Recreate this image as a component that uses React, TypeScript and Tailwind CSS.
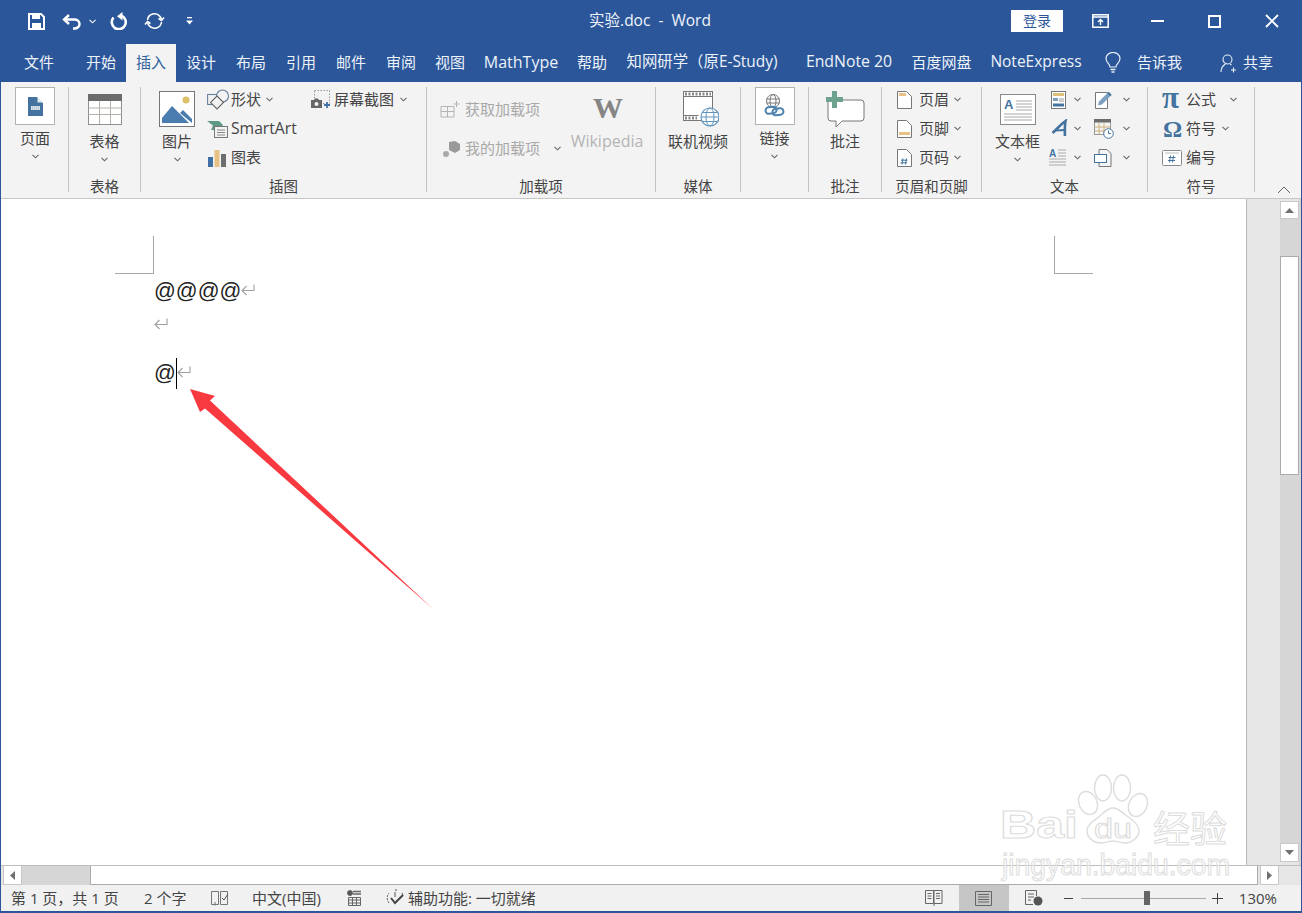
import type { ReactNode } from 'react';

const Chev = ({ color = '#666' }: { color?: string }) => (
  <svg width="7" height="5" viewBox="0 0 7 5" fill="none" stroke={color} strokeWidth="1.1"><path d="M0.5 0.8 3.5 3.8 6.5 0.8" /></svg>
);

const Sep = () => <div className="w-px mt-[5px] mb-[6px] bg-[#c3c3c3] shrink-0" />;

function Group({ className, label, children }: { className: string; label: string; children: ReactNode }) {
  return (
    <div className={`flex flex-col shrink-0 ${className}`}>
      <div className="flex-1 flex">{children}</div>
      <div className="h-[20px] mb-[1px] leading-[20px] text-center text-[14.5px] text-[#444]">{label}</div>
    </div>
  );
}

function LargeBtn({ icon, label, chev, boxed, className = '', muted }: { icon: ReactNode; label: string; chev?: boolean; boxed?: boolean; className?: string; muted?: boolean }) {
  return (
    <div className={`flex flex-col items-center pt-[5px] ${className}`}>
      {boxed ? (
        <div className="w-[40px] h-[38px] bg-white border border-[#b2b2b2] flex items-center justify-center mb-[3px]">{icon}</div>
      ) : (
        <div className="h-[44px] flex items-center justify-center">{icon}</div>
      )}
      <div className={`h-[20px] leading-[20px] whitespace-nowrap ${muted ? 'text-[16px] text-[#b4b4b4]' : 'text-[15px] text-[#444]'}`}>{label}</div>
      {chev && <div className="h-[16px] flex items-center"><Chev /></div>}
    </div>
  );
}

function Row({ icon, slot, label, chev, muted }: { icon: ReactNode; slot: string; label?: string; chev?: string; muted?: boolean }) {
  return (
    <div className="flex items-center h-[29px]">
      <div className={`flex items-center justify-start shrink-0 ${slot}`}>{icon}</div>
      {label && <span className={`whitespace-nowrap ${label === 'SmartArt' ? 'text-[15.7px]' : 'text-[15px]'} ${muted ? 'text-[#a8a8a8]' : 'text-[#444]'}`}>{label}</span>}
      {chev && <span className={`flex ${chev}`}><Chev /></span>}
    </div>
  );
}

/* title bar icons */
const SaveIcon = () => (
  <svg width="17" height="17" viewBox="0 0 17 17" fill="#fff"><path d="M1 1h12l3 3v12H1z" fill="none" stroke="#fff" strokeWidth="2" /><rect x="4" y="1" width="8" height="5" /><rect x="4" y="10" width="9" height="6" /></svg>
);
const UndoIcon = () => (
  <svg width="19" height="17" viewBox="0 0 19 17" fill="none" stroke="#fff" strokeWidth="2.4"><path d="M7 2 2 6.5 7 11" /><path d="M2.5 6.5H12a5 4.5 0 0 1 1 9h-2" /></svg>
);
const RepeatIcon = () => (
  <svg width="18" height="18" viewBox="0 0 18 18" fill="none" stroke="#fff" strokeWidth="2.6"><path d="M11.500 3.700A7 7 0 1 1 3.500 5.500" /><path d="M12.500 0v8.500L7 4.200z" fill="#fff" stroke="none" /></svg>
);
const RefreshIcon = () => (
  <svg width="21" height="18" viewBox="0 0 21 18" fill="none" stroke="#fff" strokeWidth="1.6"><path d="M3.500 8a7 7 0 0 1 12.500-3.500l1.500 2.500" /><path d="M17.500 10a7 7 0 0 1-12.500 3.500L3.500 11" /><path d="M20 5.500 17.500 8.500 14.500 6.500M1 12.500l2.500-3 3 2" /></svg>
);
const CustomizeIcon = () => (
  <svg width="7" height="8" viewBox="0 0 7 8" fill="#fff"><rect x="1" y="0" width="5" height="1.300" /><path d="M0 3.500h7L3.500 7.500z" /></svg>
);
const RibbonOptIcon = () => (
  <svg width="17" height="14" viewBox="0 0 17 14" fill="none" stroke="#fff"><rect x="0.800" y="0.800" width="15.400" height="12.400" strokeWidth="1.500" /><path d="M1 3h15" strokeWidth="1.500" /><path d="M8.500 11V6M6 8l2.500-2.500L11 8" strokeWidth="1.400" /></svg>
);
const BulbIcon = () => (
  <svg width="16" height="22" viewBox="0 0 16 22" fill="none" stroke="#e8eef7" strokeWidth="1.200"><path d="M5 15c0-3-4-4.500-4-8.500a7 6 0 0 1 14 0c0 4-4 5.500-4 8.500z" /><path d="M5.500 17.500h5M6.500 20h3" strokeWidth="1.500" /></svg>
);
const ShareIcon = () => (
  <svg width="18" height="19" viewBox="0 0 18 19" fill="none" stroke="#e8eef7" strokeWidth="1.100"><circle cx="7.500" cy="5.500" r="4.500" /><path d="M1 18c0-4 2-6.500 4.500-8M10 10l1.500 1" /><path d="M13.500 13.500v5M11 16h5" /></svg>
);

/* ribbon icons */
const PageIcon = () => (
  <svg width="15" height="19" viewBox="0 0 15 19"><path d="M0 0h9l6 6v13H0z" fill="#44739f" /><path d="M9.500 0 15 5.500H9.500z" fill="#dfe6ee" /><path d="M3 9h9v4H3z" fill="#b9cadb" /><path d="M3 10h9M3 12h9" stroke="#fff" strokeDasharray="1 1" /></svg>
);
const TableIcon = () => (
  <svg width="34" height="31" viewBox="0 0 34 31" fill="#fff" stroke="#8f8f8f"><rect x="0.500" y="0.500" width="33" height="30" /><rect x="0" y="0" width="34" height="7" fill="#6b6b6b" stroke="none" /><path d="M0.500 14h33M0.500 20.500h33M11.500 7v23M22.500 7v23" fill="none" stroke="#b5b0a8" /></svg>
);
const PictureIcon = () => (
  <svg width="36" height="36" viewBox="0 0 36 36"><rect x="0.500" y="0.500" width="35" height="35" fill="#fff" stroke="#777" /><circle cx="27" cy="9" r="3.500" fill="#dcc06a" /><path d="M3 32v-5L13 15l17 17z" fill="#4b7cb0" /><path d="M21 22l3-3 9 9v4z" fill="#4b7cb0" /></svg>
);
const ShapesIcon = () => (
  <svg width="23" height="21" viewBox="0 0 23 21" fill="none" stroke="#67809c" strokeWidth="1.100"><rect x="0.600" y="5.500" width="11" height="10" /><circle cx="15.500" cy="7" r="6" fill="#f3f3f3" /><path d="M10 7l6.500 6.500-6.500 6.500-6.500-6.500z" fill="#f3f3f3" stroke="#666" /></svg>
);
const ScreenshotIcon = () => (
  <svg width="20" height="19" viewBox="0 0 20 19" fill="none"><rect x="3.500" y="0.500" width="15" height="13" stroke="#999" strokeDasharray="1.500 1.500" /><path d="M0 10h3l1-1.500h3L8 10h3v8H0z" fill="#666" /><circle cx="5.500" cy="14" r="2" fill="#f3f3f3" /><path d="M13 15h6M16 12v6" stroke="#4373a6" strokeWidth="1.800" /></svg>
);
const SmartArtIcon = () => (
  <svg width="21" height="18" viewBox="0 0 21 18" fill="none"><path d="M0 1h12l4 4-3 5H4l2-4.500z" fill="#5d9b87" /><rect x="7.500" y="6.500" width="13" height="11" fill="#f3f3f3" stroke="#777" /><path d="M10 10h8M10 12.500h8M10 15h8" stroke="#888" /></svg>
);
const ChartIcon = () => (
  <svg width="18" height="18" viewBox="0 0 18 18"><rect x="0" y="8" width="5" height="10" fill="#3f6fa3" /><rect x="6.500" y="1" width="5" height="17" fill="#e8c184" /><rect x="13" y="5" width="5" height="13" fill="#6e6e6e" /></svg>
);
const AddinIcon = () => (
  <svg width="20" height="17" viewBox="0 0 20 17" fill="none" stroke="#b5b5b5"><path d="M1 5.500h13V16H1zM7.500 5.500V16M1 10.500h13" /><path d="M16.500 0v6M13.500 3h6" /></svg>
);
const MyAddinIcon = () => (
  <svg width="17" height="16" viewBox="0 0 17 16" fill="#9a9a9a"><path d="M6 1l6-1 5 3v6l-5 3-6-3z" /><circle cx="3" cy="13" r="3" fill="#a9a9a9" /></svg>
);
const VideoIcon = () => (
  <svg width="36" height="36" viewBox="0 0 36 36" fill="none"><rect x="0.500" y="0.500" width="29" height="29" fill="#fff" stroke="#777" /><path d="M0.500 5.500h29M0.500 24.500h15" stroke="#777" /><path d="M2 3h26M2 27h12" stroke="#888" strokeWidth="3" strokeDasharray="2 1.500" /><circle cx="27" cy="26" r="9" fill="#fff" stroke="#5f94bd" strokeWidth="1.200" /><ellipse cx="27" cy="26" rx="4" ry="9" stroke="#5f94bd" /><path d="M18 26h18M19.500 21.500h15M19.500 30.500h15" stroke="#5f94bd" /></svg>
);
const LinkIcon = () => (
  <svg width="21" height="24" viewBox="0 0 21 24" fill="none"><circle cx="9" cy="7" r="6.500" stroke="#777" /><ellipse cx="9" cy="7" rx="3" ry="6.500" stroke="#777" /><path d="M2.500 5h13M2.500 9h13" stroke="#777" /><rect x="1.500" y="13" width="11" height="6.500" rx="3.200" stroke="#4d82ad" strokeWidth="2" transform="rotate(-8 7 16)" /><rect x="8.500" y="14.500" width="11" height="6.500" rx="3.200" stroke="#4d82ad" strokeWidth="2" transform="rotate(-8 14 18)" /></svg>
);
const CommentIcon = () => (
  <svg width="39" height="37" viewBox="0 0 39 37"><path d="M2 9h33q3 0 3 3v15q0 3-3 3H16l-6 6v-6H5q-3 0-3-3z" fill="#fff" stroke="#777" /><path d="M6 0h5v6h6v5h-6v6H6v-6H0V6h6z" fill="#6da28e" /></svg>
);
const HeaderIcon = ({ band }: { band?: 'top' | 'bottom' | 'num' }) => (
  <svg width="15" height="18" viewBox="0 0 15 18" fill="#fff"><path d="M0.500 0.500h9l5 5v12h-14z" stroke="#777" />
    {band === 'top' && <rect x="2" y="2" width="7" height="3" fill="#e8c184" />}
    {band === 'bottom' && <rect x="2" y="12" width="11" height="3" fill="#e8c184" />}
    {band === 'num' && <path d="M6 9.500l-1 6M9.500 9.500l-1 6M4 11.200h6.500M3.500 13.800h6.500" stroke="#44739f" fill="none" />}
  </svg>
);
const TextBoxIcon = () => (
  <svg width="36" height="31" viewBox="0 0 36 31" fill="none"><rect x="0.500" y="0.500" width="35" height="30" fill="#fff" stroke="#8a8a8a" /><text x="4" y="15" fontSize="13" fontWeight="700" fill="#44739f" fontFamily="Liberation Sans, sans-serif">A</text><path d="M16 7h16M16 10h16M16 13h16M16 16h16M4 20h28M4 23h28M4 26h28" stroke="#aaa" /></svg>
);
const PartsIcon = () => (
  <svg width="15" height="18" viewBox="0 0 15 18"><rect x="0.500" y="0.500" width="14" height="17" fill="#fff" stroke="#777" /><rect x="2" y="2" width="11" height="3" fill="#dcc07a" /><rect x="2" y="7" width="5" height="3" fill="#7f9fbf" /><path d="M8 8h5M8 10h5" stroke="#999" /><rect x="2" y="12.500" width="11" height="3" fill="#44739f" /></svg>
);
const ArtIcon = () => (
  <svg width="17" height="19" viewBox="0 0 17 19" fill="none" stroke="#44739f" strokeWidth="2.600"><path d="M1.500 14C6 10 10 5 14.500 2c-1 5-.6 10-.6 15" /><path d="M4 11.500l10-.5" strokeWidth="1.800" /></svg>
);
const DropCapIcon = () => (
  <svg width="18" height="19" viewBox="0 0 18 19" fill="none"><text x="0" y="9" fontSize="10" fontWeight="700" fill="#44739f" fontFamily="Liberation Sans, sans-serif">A</text><path d="M9 2h8M9 5h8M9 8h8M0 11h17M0 14h17M0 17h17" stroke="#aaa" /></svg>
);
const SignIcon = () => (
  <svg width="19" height="18" viewBox="0 0 19 18" fill="none"><path d="M0.500 1.500h12v16h-12z" fill="#fff" stroke="#777" /><path d="M3 14.500l1-4 9-9 3 3-9 9z" fill="#7f9fbf" /><path d="M13 1.500l3 3" stroke="#44739f" strokeWidth="2" /></svg>
);
const DateIcon = () => (
  <svg width="20" height="20" viewBox="0 0 20 20" fill="none"><rect x="0.500" y="0.500" width="16" height="15" fill="#f3f3f3" stroke="#999" /><rect x="0" y="0" width="17" height="3.500" fill="#6b6b6b" /><path d="M5 4v11M10 4v11M1 8h15M1 12h15" stroke="#cdb07a" /><circle cx="14.500" cy="14.500" r="4.800" fill="#fff" stroke="#44739f" /><path d="M14.500 11.500v3h2.500" stroke="#44739f" /></svg>
);
const ObjectIcon = () => (
  <svg width="18" height="18" viewBox="0 0 18 18" fill="none"><path d="M5 5V0.500h8l4 4v13H5V13" stroke="#777" fill="#f3f3f3" /><rect x="0.500" y="5.500" width="12" height="8" fill="#fff" stroke="#44739f" /></svg>
);
const HashIcon = () => (
  <svg width="20" height="16" viewBox="0 0 20 16" fill="none"><rect x="0.500" y="0.500" width="19" height="15" rx="1" fill="#fff" stroke="#8a8a8a" /><path d="M3 3h14" stroke="#bbb" /><path d="M8.500 5.500l-1 7M11.500 5.500l-1 7M6.500 7.500h7M6 10.500h7" stroke="#44739f" /></svg>
);

export default function App() {
  const tabs: [string, string][] = [
    ['开始', 'w-[50px]'], ['插入', 'w-[50px]'], ['设计', 'w-[50px]'], ['布局', 'w-[50px]'], ['引用', 'w-[50px]'], ['邮件', 'w-[50px]'], ['审阅', 'w-[50px]'],
    ['视图', 'w-[48px]'], ['MathType', 'w-[94px] text-[16px]'], ['帮助', 'w-[48px]'], ['知网研学（原E-Study)', 'w-[172px] text-[15.400px]'], ['EndNote 20', 'w-[122px] text-[15.800px]'], ['百度网盘', 'w-[63px]'], ['NoteExpress', 'w-[126px] text-[15.500px]'],
  ];

  return (
    <div className="relative w-[1302px] h-[913px] overflow-hidden flex flex-col bg-[#2b579a] border-x border-b-2 border-[#2b579a] font-['Open_Sans','Noto_Sans_CJK_SC',sans-serif]">
      {/* Title bar */}
      <div className="h-[44px] pb-[2px] shrink-0 grid grid-cols-[1fr_auto_1fr] items-center text-white">
        <div className="flex items-center pl-[27px]">
          <SaveIcon />
          <span className="ml-[17px] flex"><UndoIcon /></span>
          <span className="ml-[8px] flex"><Chev color="#fff" /></span>
          <span className="ml-[14px] flex"><RepeatIcon /></span>
          <span className="ml-[16px] flex"><RefreshIcon /></span>
          <span className="ml-[21px] flex"><CustomizeIcon /></span>
        </div>
        <div className="text-[15.500px] text-[#f0f4fa] whitespace-pre -ml-[2px]">实验.doc  -  Word</div>
        <div className="flex items-center justify-end">
          <div className="w-[52px] h-[22px] bg-white text-[#2b579a] text-[14px] leading-[22px] text-center">登录</div>
          <span className="ml-[29px] flex"><RibbonOptIcon /></span>
          <div className="ml-[42px] w-[13px] h-[2px] bg-white" />
          <div className="ml-[44px] w-[13px] h-[13px] border-2 border-white" />
          <svg className="ml-[44px] mr-[22px]" width="14" height="14" viewBox="0 0 14 14" stroke="#fff" strokeWidth="1.800"><path d="M1 1l12 12M13 1 1 13" /></svg>
        </div>
      </div>

      {/* Tabs */}
      <div className="h-[38px] shrink-0 flex items-center text-[15px] text-[#eef2f9]">
        <div className="w-[75px] pl-[23px] pb-[2px]">文件</div>
        {tabs.map(([name, w]) => (
          <div key={name} className={`h-full pb-[2px] flex items-center justify-center whitespace-nowrap ${w} ${name === '插入' ? 'bg-[#f3f3f3] text-[#2f5f9e]' : ''}`}>{name}</div>
        ))}
        <span className="ml-[6px] flex"><BulbIcon /></span>
        <span className="ml-[16px] whitespace-nowrap pb-[2px]">告诉我</span>
        <span className="ml-[38px] flex"><ShareIcon /></span>
        <span className="ml-[5px] whitespace-nowrap pb-[2px]">共享</span>
      </div>

      {/* Ribbon */}
      <div className="h-[117px] shrink-0 flex bg-[#f3f3f3] border-b border-[#c6c6c6]">
        <Group className="w-[67px]" label="">
          <LargeBtn className="ml-[14px]" boxed icon={<PageIcon />} label="页面" chev />
        </Group>
        <Sep />
        <Group className="w-[71px]" label="表格">
          <LargeBtn className="w-full" icon={<TableIcon />} label="表格" chev />
        </Group>
        <Sep />
        <Group className="w-[285px]" label="插图">
          <LargeBtn className="ml-[18px] w-[36px]" icon={<PictureIcon />} label="图片" chev />
          <div className="ml-[12px] w-[104px] pt-[3px]">
            <Row slot="w-[24px]" icon={<ShapesIcon />} label="形状" chev="ml-[5px]" />
            <Row slot="w-[24px]" icon={<SmartArtIcon />} label="SmartArt" />
            <Row slot="w-[24px]" icon={<span className="ml-[1px] flex"><ChartIcon /></span>} label="图表" />
          </div>
          <div className="pt-[3px]">
            <Row slot="w-[23px]" icon={<ScreenshotIcon />} label="屏幕截图" chev="ml-[6px]" />
          </div>
        </Group>
        <Sep />
        <Group className="w-[228px]" label="加载项">
          <div className="ml-[13px] w-[131px] pt-[13px]">
            <Row slot="w-[25px]" icon={<AddinIcon />} label="获取加载项" muted />
            <div className="h-[10px]" />
            <Row slot="w-[25px]" icon={<span className="ml-[3px] flex"><MyAddinIcon /></span>} label="我的加载项" chev="ml-[14px]" muted />
          </div>
          <LargeBtn className="w-[72px]" muted icon={<span className="font-['Liberation_Serif',serif] font-bold text-[30px] leading-none text-[#858585] pb-[3px] pl-[2px]">W</span>} label="Wikipedia" />
        </Group>
        <Sep />
        <Group className="w-[84px]" label="媒体">
          <LargeBtn className="w-full" icon={<span className="ml-[6px] flex"><VideoIcon /></span>} label="联机视频" />
        </Group>
        <Sep />
        <Group className="w-[67px]" label="">
          <LargeBtn className="w-full" boxed icon={<LinkIcon />} label="链接" chev />
        </Group>
        <Sep />
        <Group className="w-[72px]" label="批注">
          <LargeBtn className="w-full" icon={<CommentIcon />} label="批注" />
        </Group>
        <Sep />
        <Group className="w-[99px]" label="页眉和页脚">
          <div className="ml-[13px] pt-[3px]">
            <Row slot="w-[24px]" icon={<span className="ml-[2px] flex"><HeaderIcon band="top" /></span>} label="页眉" chev="ml-[5px]" />
            <Row slot="w-[24px]" icon={<span className="ml-[2px] flex"><HeaderIcon band="bottom" /></span>} label="页脚" chev="ml-[5px]" />
            <Row slot="w-[24px]" icon={<span className="ml-[2px] flex"><HeaderIcon band="num" /></span>} label="页码" chev="ml-[5px]" />
          </div>
        </Group>
        <Sep />
        <Group className="w-[165px]" label="文本">
          <LargeBtn className="ml-[13px] w-[45px]" icon={<TextBoxIcon />} label="文本框" chev />
          <div className="ml-[8px] w-[44px] pt-[3px]">
            <Row slot="w-[26px]" icon={<span className="ml-[3px] flex"><PartsIcon /></span>} chev="ml-0" />
            <Row slot="w-[26px]" icon={<span className="ml-[3px] flex"><ArtIcon /></span>} chev="ml-0" />
            <Row slot="w-[26px]" icon={<span className="ml-[1px] flex"><DropCapIcon /></span>} chev="ml-0" />
          </div>
          <div className="pt-[3px]">
            <Row slot="w-[31px]" icon={<span className="ml-[3px] flex"><SignIcon /></span>} chev="ml-0" />
            <Row slot="w-[31px]" icon={<span className="ml-[2px] flex"><DateIcon /></span>} chev="ml-0" />
            <Row slot="w-[31px]" icon={<span className="ml-[2px] flex"><ObjectIcon /></span>} chev="ml-0" />
          </div>
        </Group>
        <Sep />
        <Group className="w-[106px]" label="符号">
          <div className="ml-[12px] pt-[3px]">
            <Row slot="w-[26px]" icon={<span className="ml-[2px] font-['Liberation_Serif',serif] font-bold text-[31px] leading-[20px] pb-[4px] text-[#44739f]">π</span>} label="公式" chev="ml-[14px]" />
            <Row slot="w-[26px]" icon={<span className="ml-[3px] font-['Liberation_Serif',serif] font-bold text-[24px] leading-none text-[#44739f]">Ω</span>} label="符号" chev="ml-[6px]" />
            <Row slot="w-[26px]" icon={<span className="ml-[2px] flex"><HashIcon /></span>} label="编号" />
          </div>
        </Group>
        <Sep />
        <div className="flex-1 flex items-end justify-end pr-[10px] pb-[4px]">
          <svg width="14" height="8" viewBox="0 0 14 8" fill="none" stroke="#666"><path d="M1 7l6-6 6 6" /></svg>
        </div>
      </div>

      {/* Document */}
      <div className="flex-1 min-h-0 flex bg-[#e6e6e6]">
        <div className="w-[1246px] bg-white border-r border-[#b9b9b9] shrink-0">
          <div className="pt-[37px] pl-[114px] pr-[153px] flex justify-between">
            <div className="w-[39px] h-[38px] border-r border-b border-[#a8a8a8]" />
            <div className="w-[39px] h-[38px] border-l border-b border-[#a8a8a8]" />
          </div>
          <div className="pl-[153px] font-['Liberation_Sans',sans-serif] text-[21.500px] text-[#222]">
            <div className="h-[34px] flex items-center">
              @@@@
              <ReturnMark />
            </div>
            <div className="h-[34px] flex items-center"><ReturnMark /></div>
            <div className="h-[33px] mt-[15px] flex items-center">
              @
              <span className="w-px h-[31px] bg-black" />
              <ReturnMark />
            </div>
          </div>
        </div>
        <div className="w-[33px] shrink-0" />
        {/* Vertical scrollbar */}
        <div className="w-[19px] shrink-0 pt-[2px] pb-[3px] flex flex-col">
          <div className="h-[18px] bg-white border border-[#c8c8c8] flex items-center justify-center"><Tri dir="up" /></div>
          <div className="h-[37px] bg-[#d6d6d6]" />
          <div className="h-[219px] bg-white border border-[#ababab]" />
          <div className="flex-1 bg-[#d6d6d6]" />
          <div className="h-[19px] bg-white border border-[#c8c8c8] flex items-center justify-center"><Tri dir="down" /></div>
        </div>
        <div className="flex-1 bg-[#d6d6d6]" />
      </div>

      {/* Horizontal scrollbar */}
      <div className="h-[20px] shrink-0 flex items-stretch bg-[#e6e6e6] border-t border-[#bdbdbd] pl-[2px]">
        <div className="w-[19px] bg-white border-x border-b border-[#c8c8c8] flex items-center justify-center"><Tri dir="left" /></div>
        <div className="w-[68px] bg-[#d6d6d6]" />
        <div className="w-[1168px] bg-white border-x border-b border-[#ababab]" />
        <div className="w-[2px]" />
        <div className="w-[19px] bg-white border-x border-b border-[#c8c8c8] flex items-center justify-center"><Tri dir="right" /></div>
      </div>

      {/* Status bar */}
      <div className="h-[26px] shrink-0 flex items-center bg-[#f1f1f1] text-[15px] text-[#444] whitespace-nowrap">
        <span className="ml-[10px] w-[133px]">第 1 页，共 1 页</span>
        <span className="w-[67px]">2 个字</span>
        <svg width="18" height="15" viewBox="0 0 18 15" fill="none" stroke="#777"><path d="M0.500 0.500h7v13h-7zM9.500 0.500h7v13h-7z" /><path d="M4 14.500V11" /><path d="M11 7l2 2 4-6" stroke="#555" /></svg>
        <span className="ml-[23px] w-[95px]">中文(中国)</span>
        <svg width="15" height="16" viewBox="0 0 15 16" fill="none" stroke="#666"><circle cx="3" cy="3" r="2.500" fill="#555" /><path d="M6 1.500h8M6 4h8" strokeWidth="1.500" /><path d="M1.500 7.500h12v8h-12zM1.500 10h12M1.500 13h12M5.500 7.500v8M9.500 7.500v8" /></svg>
        <svg className="ml-[24px]" width="19" height="18" viewBox="0 0 19 18" fill="none" stroke="#555"><path d="M3 14a8 8 0 0 1 0-10M16 4l1 2M9 1h3" strokeDasharray="2 1.200" /><path d="M5 9l4 5 8-8" strokeWidth="2" stroke="#444" /><path d="M9 3v5" /></svg>
        <span className="ml-[3px]">辅助功能: 一切就绪</span>
        <div className="flex-1" />
        <svg width="18" height="16" viewBox="0 0 18 16" fill="none" stroke="#666"><path d="M0.500 0.500h8v13h-8zM9 0.500h8v13H9z" /><path d="M2.500 3.500h4M2.500 6h4M2.500 8.500h4M11 3.500h4M11 6h4M11 8.500h4M9 14v2" /></svg>
        <div className="ml-[16px] w-[50px] h-full bg-[#c6c6c6] flex items-center justify-center">
          <svg width="17" height="15" viewBox="0 0 17 15" fill="none" stroke="#666"><path d="M0.500 0.500h16v14h-16z" /><path d="M3 3.500h11M3 6h11M3 8.500h11M3 11h11" /></svg>
        </div>
        <svg className="ml-[16px]" width="18" height="16" viewBox="0 0 18 16" fill="none" stroke="#666"><path d="M8 14.500H0.500V0.500h11V6" /><path d="M3 4h6M3 7h6M3 10h3" /><circle cx="13" cy="11" r="4.500" fill="#555" stroke="none" /></svg>
        <div className="ml-[21px] w-[9px] h-px bg-[#444]" />
        <div className="ml-[8px] w-[125px] h-px bg-[#a8a8a8] flex items-center">
          <div className="ml-[63px] w-[6px] h-[14px] bg-[#666] shrink-0" />
        </div>
        <div className="ml-[6px] relative w-[11px] h-[11px] flex items-center justify-center">
          <div className="w-[11px] h-px bg-[#444]" />
          <div className="absolute w-px h-[11px] bg-[#444]" />
        </div>
        <span className="ml-[16px] mr-[24px]">130%</span>
      </div>

      {/* Baidu watermark */}
      <svg className="absolute left-[994px] top-[770px]" width="240" height="118" viewBox="995 770 240 118" fill="none" stroke="#dcdcdc">
        <text x="1000" y="838" fontSize="39" fontWeight="700" fontFamily="Liberation Sans, sans-serif" textLength="78" lengthAdjust="spacingAndGlyphs" fill="#fff">Bai</text>
        <text x="1094" y="838" fontSize="27" fontFamily="Liberation Sans, sans-serif" textLength="38" lengthAdjust="spacingAndGlyphs" fill="#fff">du</text>
        <text x="1153" y="843" fontSize="37" fontFamily="Noto Sans CJK SC, sans-serif" textLength="74" lengthAdjust="spacingAndGlyphs" fill="#fff">经验</text>
        <text x="1002" y="875" fontSize="29" fontFamily="Liberation Sans, sans-serif" textLength="228" lengthAdjust="spacingAndGlyphs" fill="#fff" fillOpacity="0.4">jingyan.baidu.com</text>
        <ellipse cx="1088" cy="803" rx="9" ry="12" transform="rotate(-25 1088 803)" strokeWidth="1.400" />
        <ellipse cx="1103" cy="788" rx="8.500" ry="13" strokeWidth="1.400" />
        <ellipse cx="1122" cy="788" rx="8.500" ry="13" strokeWidth="1.400" />
        <ellipse cx="1138" cy="805" rx="9" ry="12" transform="rotate(25 1138 805)" strokeWidth="1.400" />
        <path d="M1113 808c6 0 9 5 14 8s12 9 12 15-7 12-14 12c-5 0-8-2-12-2s-7 2-12 2c-7 0-14-5-14-12s8-11 13-15 7-8 13-8z" strokeWidth="1.400" />
      </svg>

      {/* Red arrow */}
      <svg className="absolute left-[180px] top-[380px]" width="260" height="240" viewBox="180 380 260 240">
        <polygon points="189,389 214,396 209,400.500 432,609 204,408.500 199,412" fill="#f83a40" />
      </svg>
    </div>
  );
}

function ReturnMark() {
  return (
    <svg width="14" height="13" viewBox="0 0 14 13" fill="none" stroke="#a0a0a0" strokeWidth="1.100" className="mb-[2px]">
      <path d="M13 0.500V6.500H1M5.500 2 1 6.500 5.500 11" />
    </svg>
  );
}

function Tri({ dir }: { dir: 'up' | 'down' | 'left' | 'right' }) {
  const pts = { up: '0,5 9,5 4.5,0', down: '0,0 9,0 4.5,5', left: '5,0 5,9 0,4.5', right: '0,0 0,9 5,4.5' }[dir];
  const horizontal = dir === 'up' || dir === 'down';
  return (
    <svg width={horizontal ? 9 : 5} height={horizontal ? 5 : 9} fill="#707070">
      <polygon points={pts} />
    </svg>
  );
}
